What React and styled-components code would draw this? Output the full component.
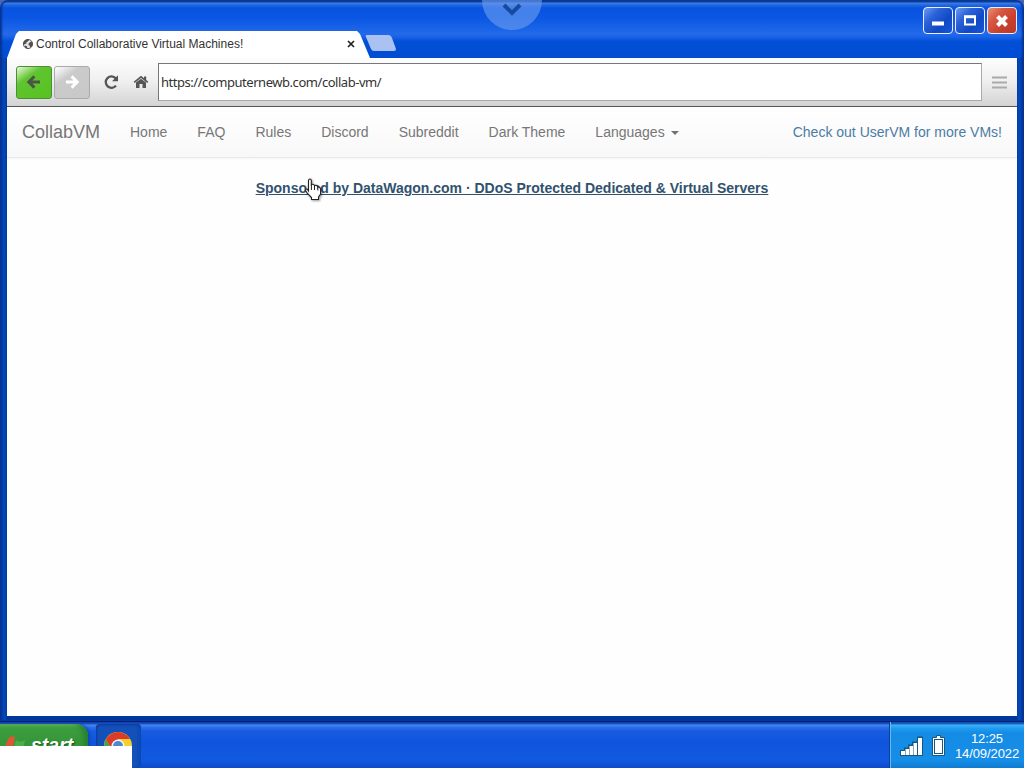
import React from "react";
import styled, { createGlobalStyle } from "styled-components";

const GlobalStyle = createGlobalStyle`
  * { box-sizing: border-box; }
  body { margin: 0; overflow: hidden; font-family: "Liberation Sans", Arial, sans-serif; }
  svg { display: block; flex: none; }
`;

const Desktop = styled.div`
  position: relative;
  width: 1024px;
  height: 768px;
  display: flex;
  flex-direction: column;
  overflow: hidden;
  background: #4a66b8;
`;

const Window = styled.main`
  height: 722px;
  display: flex;
  flex-direction: column;
  padding: 0 7px 6px;
  border-radius: 8px 8px 0 0;
  background:
    linear-gradient(#0b3f9a 0, #0b3f9a 2px, #3f7de6 3px, #2268e4 5px, #0653e0 8px, #0b57e4 18px, #236aea 34px, #1a62e6 37px, #0350d8 41px, #004dd2 58px, transparent 58px),
    linear-gradient(90deg, #0a2d94 0, #0543b8 2px, #0545b9 5px, #00379c 7px, #00379c 1017px, #0546b6 1018px, #0545b9 1021px, #032b86 1024px);
  box-shadow: inset 0 -1px #001f75, inset 0 -2px #02379c, inset 2px 0 2px #073391, inset -2px 0 2px #073391;
`;

const TitleBar = styled.header`
  height: 58px;
  flex: none;
  display: flex;
  align-items: flex-end;
`;

const Tab = styled.div`
  width: 363px;
  height: 27px;
  flex: none;
  display: flex;
  align-items: center;
  padding: 0 15px 1px;
  background: #fff;
  clip-path: polygon(0 100%, 9px 3px, 12px 0, 350px 0, 353px 3px, 363px 100%);
`;

const TabTitle = styled.span`
  margin-left: 2px;
  flex: 1;
  white-space: nowrap;
  font-size: 12px;
  line-height: 16px;
  color: #333;
`;

const NewTab = styled.div`
  width: 32px;
  height: 16px;
  margin: 0 0 7px -5px;
`;

const WindowButtons = styled.div`
  margin: 0 0 0 auto;
  height: 58px;
  padding-top: 7px;
  display: flex;
  gap: 2px;
`;

const WindowButton = styled.button`
  width: 30px;
  height: 27px;
  display: grid;
  place-items: center;
  padding: 0;
  border: 1px solid #e9efff;
  border-radius: 4px;
  background: ${(p) =>
    p.$close
      ? "linear-gradient(135deg, #e99077 0%, #d85a43 30%, #c8402c 65%, #b9382a 100%)"
      : "linear-gradient(135deg, #6f9af0 0%, #2b62d8 32%, #1149c4 65%, #1556d8 100%)"};
`;

const Toolbar = styled.div`
  height: 49px;
  flex: none;
  display: flex;
  align-items: center;
  padding: 0 11px 0 9px;
  border-bottom: 1px solid #555;
  background: linear-gradient(#fdfdfd, #f1f1f1 45%, #d3d3d3);
`;

const NavButton = styled.button`
  width: 36px;
  height: 33px;
  margin-right: 2px;
  flex: none;
  display: grid;
  place-items: center;
  padding: 0;
  border: 1px solid ${(p) => (p.$active ? "#4a8f38" : "#aaa")};
  border-radius: 3px;
  background: ${(p) =>
    p.$active
      ? "linear-gradient(145deg, #eaf8df 0%, #a4de83 17%, #5fc430 33%, #58c21e 100%)"
      : "linear-gradient(145deg, #fff 0%, #e4e4e4 18%, #cbcbcb 33%, #c8c8c8 100%)"};
`;

const ToolIcons = styled.div`
  display: flex;
  align-items: center;
  gap: 14px;
  margin: 0 9px 0 11px;
`;

const Address = styled.div`
  width: 824px;
  height: 38px;
  flex: none;
  margin-right: 10px;
  display: flex;
  align-items: center;
  padding: 0 2px 1px;
  border: 1px solid #aaa;
  border-top-color: #77777f;
  border-left-color: #777;
  background: #fff;
  font: 13px/18px "Noto Sans", "Open Sans", sans-serif;
  letter-spacing: -0.46px;
  color: #333;
`;

const Page = styled.section`
  flex: 1;
  background: #fefefe;
`;

const NavBar = styled.nav`
  height: 51px;
  display: flex;
  align-items: center;
  padding: 0 15px;
  border-bottom: 1px solid #e9e9e9;
  background: linear-gradient(#fff, #f8f8f8);
  box-shadow: 0 1px 2px rgba(0, 0, 0, 0.04);
`;

const Brand = styled.span`
  width: 108px;
  font-size: 18px;
  line-height: 20px;
  color: #777;
`;

const NavLink = styled.span`
  display: flex;
  align-items: center;
  margin-right: 30px;
  white-space: nowrap;
  font-size: 14px;
  line-height: 20px;
  color: #777;
`;

const Caret = styled.i`
  margin: 2px 0 0 6px;
  border: 4px solid transparent;
  border-top-color: #707070;
  border-bottom: 0;
`;

const PromoLink = styled.span`
  margin-left: auto;
  white-space: nowrap;
  font-size: 14px;
  line-height: 20px;
  color: #4b7ca5;
`;

const Sponsor = styled.div`
  padding-top: 20px;
  text-align: center;
  font-weight: bold;
  font-size: 14px;
  line-height: 20px;
  color: #31526e;
  text-decoration: underline;
`;

const Taskbar = styled.footer`
  height: 46px;
  display: flex;
  background: linear-gradient(#0e3b9c 0, #1854cf 2px, #4a89f0 3px, #2f70ea 5px, #175ce0 9px, #0f55dc 20px, #1259e1 38px, #0d4cc9 46px);
`;

const StartButton = styled.div`
  width: 88px;
  height: 44px;
  margin-top: 2px;
  display: flex;
  padding: 12px 0 0 5px;
  border-radius: 0 12px 14px 0;
  background: linear-gradient(#5fb862 0, #3d9e40 4px, #36983a 15px, #35923a 44px);
  box-shadow: inset -6px 0 6px -2px #247d2a, 2px 0 3px #1048b8;
`;

const StartLabel = styled.span`
  margin: -1px 0 0 5px;
  font-size: 19.5px;
  line-height: 20px;
  font-weight: bold;
  font-style: italic;
  color: #fff;
  text-shadow: 1px 1px 2px #164d18;
`;

const TaskItem = styled.div`
  width: 45px;
  height: 44px;
  margin: 2px 0 0 8px;
  padding: 8px 0 0 8px;
  border-radius: 4px;
  background: #1450b9;
  box-shadow: inset 1px 1px 2px #0b3c9b, inset -3px 0 3px #0c49b4;
`;

const Tray = styled.div`
  width: 134px;
  margin-left: auto;
  display: flex;
  border-left: 1px solid #62bdf5;
  background: linear-gradient(#0b4cac 0, #1268c6 2px, #45b0f5 3px, #209df0 6px, #148ce4 11px, #168ee8 38px, #0e7bd0 46px);
  box-shadow: -1px 0 #083b9e;
`;

const Clock = styled.div`
  width: 68px;
  margin: 9px 0 0 4px;
  text-align: center;
  white-space: nowrap;
  color: #fff;
  font-size: 13px;
  line-height: 15px;
  letter-spacing: -0.1px;
`;

const CornerPanel = styled.div`
  position: absolute;
  left: 0;
  bottom: 0;
  width: 132px;
  height: 22px;
  background: #fff;
`;

const Notch = styled.div`
  position: absolute;
  left: 482px;
  top: -30px;
  width: 60px;
  height: 60px;
  padding: 33px 0 0 20px;
  border-radius: 50%;
  background: rgba(106, 157, 239, 0.62);
`;

const Pointer = styled.svg`
  position: absolute;
  left: 304px;
  top: 177px;
  filter: drop-shadow(1px 1px 1px rgba(0, 0, 0, 0.4));
`;

const Globe = () => (
  <svg width="12" height="12" viewBox="0 0 12 12">
    <circle cx="6" cy="6" r="4.6" fill="#e4e4e4" stroke="#555" strokeWidth="1" />
    <path d="M1.3 4.5L2.8 2.2L5.5 1.2L7 2.2L5.8 3.6L4.2 4.4L4.6 5.6L3.2 6L1.6 6.8ZM7.4 4.4L9.6 3.6L10.6 5.4L9.8 8.2L8.2 9.6L7.6 7.6L6.2 6.6ZM3 7.6L5 8.2L5.4 10.4L3 9.4Z" fill="#505050" />
  </svg>
);

const Arrow = ({ right }) => (
  <svg width="16" height="16" viewBox="0 0 16 16">
    <path
      d={right ? "M7.6 2.4L13.2 8L7.6 13.6M12.5 8H2" : "M8.4 2.4L2.8 8L8.4 13.6M3.5 8H14"}
      fill="none"
      stroke={right ? "#fff" : "#4b5546"}
      strokeWidth="3"
    />
  </svg>
);

const NAV = ["Home", "FAQ", "Rules", "Discord", "Subreddit", "Dark Theme"];

export default function App() {
  return (
    <Desktop>
      <GlobalStyle />
      <Window>
        <TitleBar>
          <Tab>
            <Globe />
            <TabTitle>Control Collaborative Virtual Machines!</TabTitle>
            <svg width="8" height="8" viewBox="0 0 8 8">
              <path d="M1 1L7 7M7 1L1 7" stroke="#222" strokeWidth="1.7" />
            </svg>
          </Tab>
          <NewTab>
            <svg width="32" height="16" viewBox="0 0 32 16">
              <path d="M2 0H23Q26 0 27 3L31 14Q31 16 29 16H9Q7 16 6 14L1 2Q0 0 2 0Z" fill="#a9c2f2" />
            </svg>
          </NewTab>
          <WindowButtons>
            <WindowButton>
              <svg width="14" height="14"><path d="M1 9.5H13" stroke="#fff" strokeWidth="4" /></svg>
            </WindowButton>
            <WindowButton>
              <svg width="14" height="14">
                <path d="M2 3H12V10.5H2Z" fill="none" stroke="#fff" strokeWidth="2" />
                <path d="M1 2.7H13" stroke="#fff" strokeWidth="3" />
              </svg>
            </WindowButton>
            <WindowButton $close>
              <svg width="14" height="14"><path d="M2.5 2.5L11.5 11.5M11.5 2.5L2.5 11.5" stroke="#fff" strokeWidth="4" /></svg>
            </WindowButton>
          </WindowButtons>
        </TitleBar>
        <Toolbar>
          <NavButton $active><Arrow /></NavButton>
          <NavButton><Arrow right /></NavButton>
          <ToolIcons>
            <svg width="16" height="16" viewBox="0 0 16 16">
              <path d="M12.8 4.4A5.7 5.7 0 1 0 13 11.6" fill="none" stroke="#555" strokeWidth="2.3" />
              <path d="M15 1.2V7.2H9Z" fill="#555" />
            </svg>
            <svg width="16" height="14" viewBox="0 0 16 14">
              <path d="M1.2 7.4L8 1.8L14.8 7.4" fill="none" stroke="#555" strokeWidth="1.7" />
              <path d="M11 1.5H13.2V6L11 4.2ZM3 7.6L8 3.7L13 7.6V13H9.5V9H6.5V13H3Z" fill="#555" />
            </svg>
          </ToolIcons>
          <Address>https://computernewb.com/collab-vm/</Address>
          <svg width="15" height="13"><path d="M0 1.5H15M0 6.5H15M0 11.5H15" stroke="#aaa" strokeWidth="2" /></svg>
        </Toolbar>
        <Page>
          <NavBar>
            <Brand>CollabVM</Brand>
            {NAV.map((label) => <NavLink key={label}>{label}</NavLink>)}
            <NavLink>Languages<Caret /></NavLink>
            <PromoLink>Check out UserVM for more VMs!</PromoLink>
          </NavBar>
          <Sponsor>Sponsored by DataWagon.com · DDoS Protected Dedicated &amp; Virtual Servers</Sponsor>
        </Page>
      </Window>
      <Taskbar>
        <StartButton>
          <svg width="21" height="22" viewBox="0 0 21 22">
            <path d="M3 3Q6 -1 10 1L8 11Q4 8 0 11Z" fill="#df5634" />
            <path d="M11 4Q15 7 20 4L18 12Q13 15 9 12Z" fill="#4eae45" />
            <path d="M0 12Q4 9 8 12L6 20Q2 17 0 20Z" fill="#3e78d8" />
            <path d="M9 13Q13 16 17 13L15 21Q11 24 7 21Z" fill="#efc940" />
          </svg>
          <StartLabel>start</StartLabel>
        </StartButton>
        <TaskItem>
          <svg width="28" height="28" viewBox="0 0 28 28">
            <circle cx="14" cy="14" r="14" fill="#f6cf2d" />
            <path d="M14 14L7.9 17.5L1.9 7A14 14 0 0 0 14 28L20 17Z" fill="#47a34b" />
            <path d="M14 14L7.9 17.5L1.9 7A14 14 0 0 1 26.1 7H14Z" fill="#dc3b2a" />
            <circle cx="14" cy="14" r="6.5" fill="#f4f4f4" />
            <circle cx="14" cy="14" r="5" fill="#4c89d5" />
          </svg>
        </TaskItem>
        <Tray>
          <svg width="58" height="46" viewBox="0 0 58 46">
            <path d="M9 28H13V25.5H17V22.5H21V19.5H26V14.5H32V34H9Z" fill="#17577f" />
            <path d="M10 29H14V33H10ZM14.5 27H18V33H14.5ZM18.5 24H22V33H18.5ZM22.5 21H26V33H22.5ZM27 16H31V33H27Z" fill="#fff" />
            <path d="M45.5 13.5H49.5V15.5H53.5V33.5H41.5V15.5H45.5Z" fill="#fff" stroke="#17577f" />
            <rect x="43.5" y="17.5" width="8" height="14" fill="#fff" stroke="#17577f" />
          </svg>
          <Clock>12:25<br />14/09/2022</Clock>
        </Tray>
      </Taskbar>
      <CornerPanel />
      <Notch>
        <svg width="20" height="14"><path d="M2 2L10 10L18 2" fill="none" stroke="#164b9b" strokeWidth="4" /></svg>
      </Notch>
      <Pointer width="20" height="24" viewBox="0 0 20 24">
        <path d="M4.5 14V3.5Q4.5 2 6 2Q7.3 2 7.3 3.5V8.5Q7.5 7 9 7.3Q10.4 7.5 10.5 9Q11 8 12.4 8.4Q13.8 9 13.8 10.4Q14.3 9.6 15.5 10.2Q16.6 11 16.6 12.5V17L14.5 20V22.5H7.5V20.5L3.5 16.5L1.5 13.5Q1.5 11.8 3 12Z" fill="#fff" stroke="#222" strokeWidth="1.1" />
        <path d="M7.4 8V13M10.5 9V13M13.8 10.4V13.5" stroke="#222" strokeWidth="1" />
      </Pointer>
    </Desktop>
  );
}
